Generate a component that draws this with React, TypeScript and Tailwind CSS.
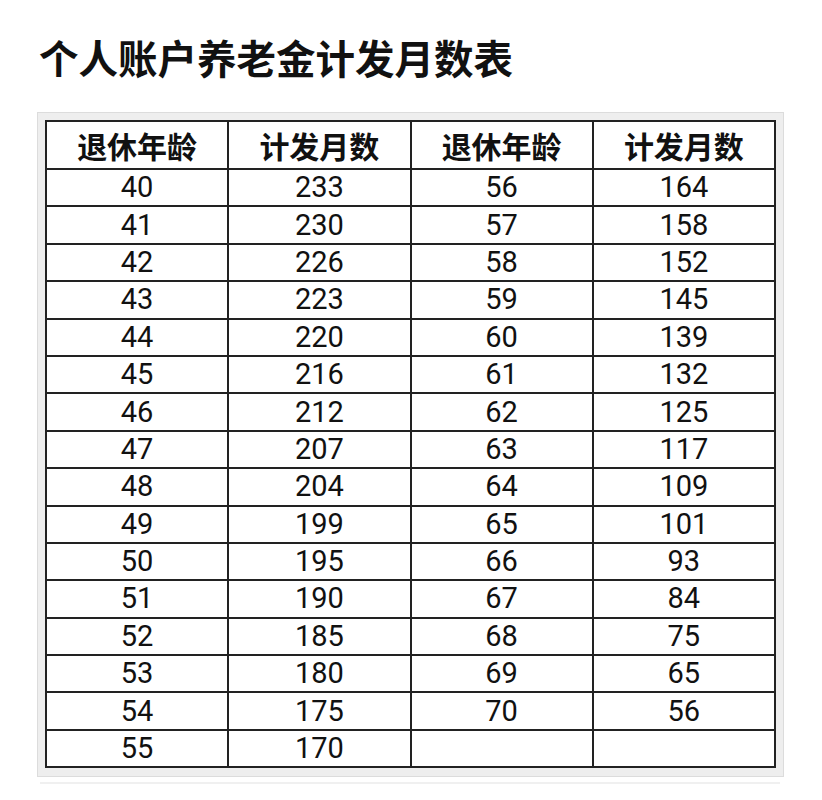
const left: [string, string][] = [
  ['40', '233'], ['41', '230'], ['42', '226'], ['43', '223'], ['44', '220'], ['45', '216'],
  ['46', '212'], ['47', '207'], ['48', '204'], ['49', '199'], ['50', '195'], ['51', '190'],
  ['52', '185'], ['53', '180'], ['54', '175'], ['55', '170'],
];

const right: [string, string][] = [
  ['56', '164'], ['57', '158'], ['58', '152'], ['59', '145'], ['60', '139'], ['61', '132'],
  ['62', '125'], ['63', '117'], ['64', '109'], ['65', '101'], ['66', '93'], ['67', '84'],
  ['68', '75'], ['69', '65'], ['70', '56'], ['', ''],
];

const cell = 'border-2 border-[#222] text-center p-0';

export default function App() {
  return (
    <div className="w-[822px] h-[800px] bg-white text-[#111]" style={{ fontFamily: 'Roboto, "Noto Sans CJK SC", sans-serif' }}>
      <h1
        className="pt-[37px] pl-[39px] text-[39.5px] leading-[40px] font-bold"
        style={{ fontFamily: '"Noto Sans CJK SC", sans-serif' }}
      >
        个人账户养老金计发月数表
      </h1>

      <div className="mt-[35px] ml-[37px] w-[747px] border border-[#dcdcdc] bg-[#eeeeee] pl-[7px] pr-[5px] pt-[7px] pb-[8px]">
        <table className="w-[731px] border-collapse bg-white table-fixed">
          <thead>
            <tr className="h-[48px]" style={{ fontFamily: '"Noto Sans CJK SC", sans-serif' }}>
              {['退休年龄', '计发月数', '退休年龄', '计发月数'].map((h, i) => (
                <th key={i} className={`${cell} w-1/4 text-[30px] leading-none font-bold`}>{h}</th>
              ))}
            </tr>
          </thead>
          <tbody>
            {left.map((row, i) => (
              <tr key={i} className="h-[37.4px] text-[29px] leading-none">
                <td className={cell}>{row[0]}</td>
                <td className={cell}>{row[1]}</td>
                <td className={cell}>{right[i][0]}</td>
                <td className={cell}>{right[i][1]}</td>
              </tr>
            ))}
          </tbody>
        </table>
      </div>
      <div className="ml-[40px] mt-[5px] h-[2px] w-[740px] bg-[#f0f0f0]" />
    </div>
  );
}
